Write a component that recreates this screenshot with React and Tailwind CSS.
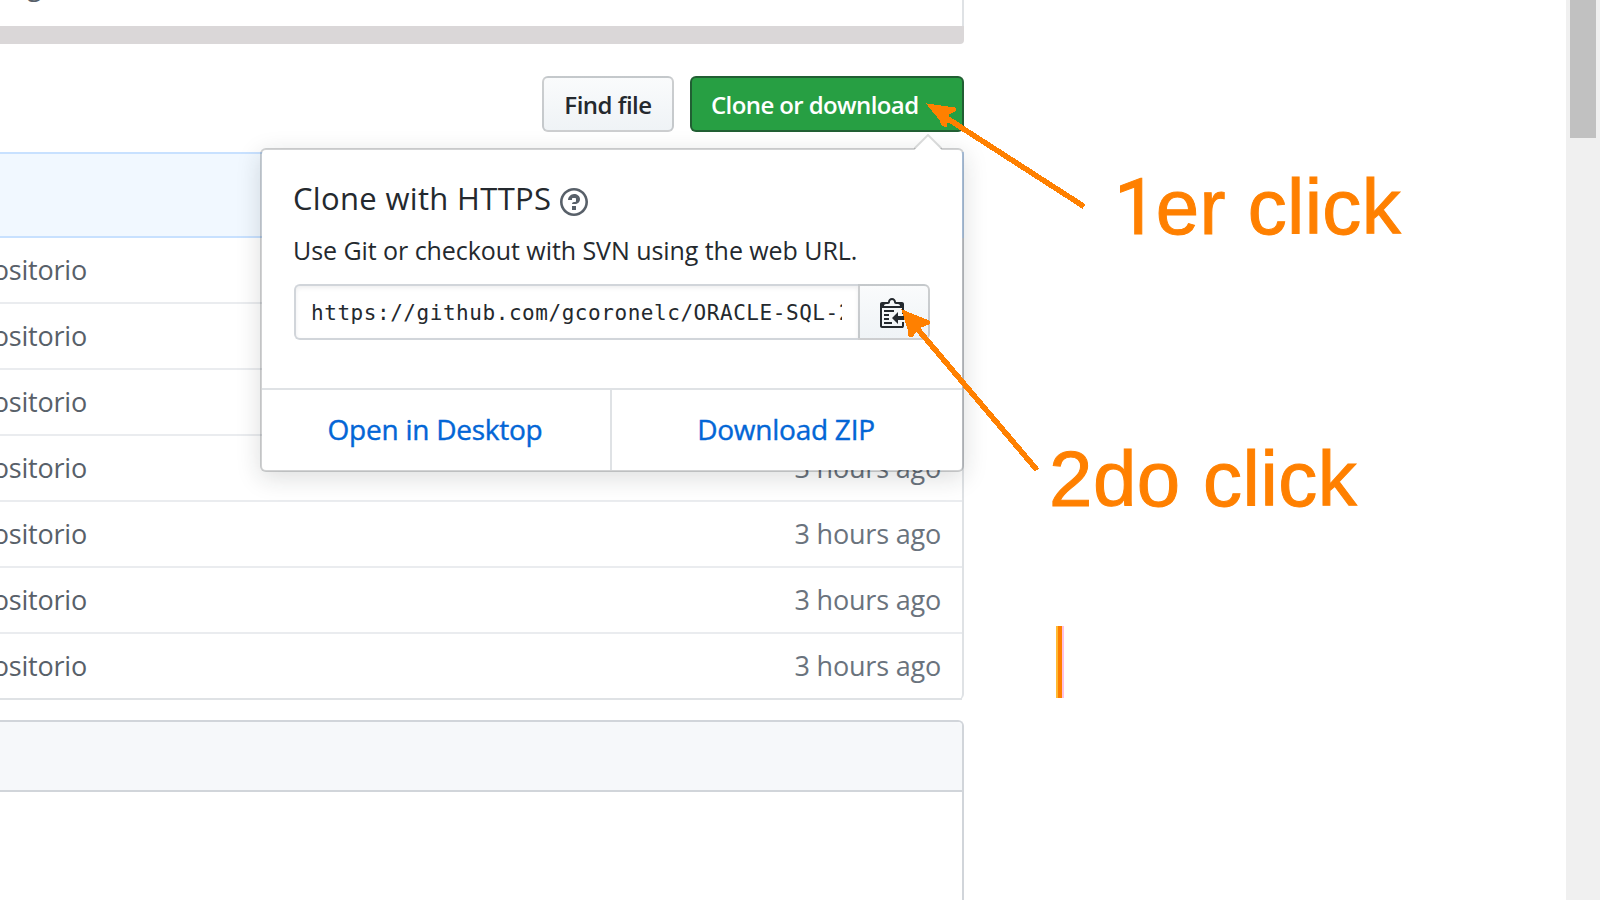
import React from 'react';

const rows = [1, 2, 3, 4, 5, 6, 7];

function CommitRow({ last }) {
  return (
    <div className={`flex h-[66px] items-center justify-between border-b-2 pr-[21px] ${last ? 'border-[#dfe2e5]' : 'border-[#eaecef]'}`}>
      <span className="flex w-[87px] justify-end overflow-hidden whitespace-nowrap text-[27px] leading-[40px] tracking-[-0.2px] text-[#586069]">
        repositorio
      </span>
      <span className="whitespace-nowrap text-[27px] leading-[40px] tracking-[-0.2px] text-[#6a737d]">3 hours ago</span>
    </div>
  );
}

function QuestionIcon() {
  return (
    <svg className="h-8 w-7 fill-[#586069]" viewBox="0 0 14 16">
      <path d="M6 10h2v2H6v-2zm4-3.5C10 8.64 8 9 8 9H6c0-.55.45-1 1-1h.5c.28 0 .5-.22.5-.5v-1c0-.28-.22-.5-.5-.5h-1c-.28 0-.5.22-.5.5V7H4c0-1.5 1.5-3 3-3s3 1 3 2.5zM7 2.3c3.14 0 5.7 2.56 5.7 5.7s-2.56 5.7-5.7 5.7A5.71 5.71 0 0 1 1.3 8c0-3.14 2.56-5.7 5.7-5.7zM7 1C3.14 1 0 4.14 0 8s3.14 7 7 7 7-3.14 7-7-3.14-7-7-7z" />
    </svg>
  );
}

function ClippyIcon() {
  return (
    <svg className="h-8 w-7 fill-[#24292e]" viewBox="0 0 14 16">
      <path fillRule="evenodd" d="M2 13h4v1H2v-1zm5-6H2v1h5V7zm2 3V8l-3 3 3 3v-2h5v-2H9zM4.5 9H2v1h2.5V9zM2 12h2.5v-1H2v1zm9 1h1v2c-.02.28-.11.52-.3.7-.19.18-.42.28-.7.3H1c-.55 0-1-.45-1-1V4c0-.55.45-1 1-1h3c0-1.11.89-2 2-2 1.11 0 2 .89 2 2h3c.55 0 1 .45 1 1v5h-1V6H1v9h10v-2zM2 5h8c0-.55-.45-1-1-1H8c-.55 0-1-.45-1-1s-.45-1-1-1-1 .45-1 1-.45 1-1 1H3c-.55 0-1 .45-1 1z" />
    </svg>
  );
}

function ClonePopover() {
  return (
    <div className="absolute top-[148px] left-[260px] flex h-[324px] w-[704px] flex-col rounded-[6px] border-2 border-[#1b1f23]/20 bg-white bg-clip-padding shadow-[0_6px_24px_rgba(27,31,35,0.15)]">
      <svg className="absolute -top-4 right-5 h-4 w-7" viewBox="0 0 28 16">
        <path d="M0 16 14 2 28 16z" fill="#fff" />
        <path d="M0 15 14 1 28 15" fill="none" stroke="#1b1f23" strokeOpacity="0.15" strokeWidth="2" />
      </svg>
      <div className="flex flex-1 flex-col px-8 pt-7">
        <h4 className="-ml-px flex h-10 items-center gap-2 whitespace-nowrap text-[31px] leading-[40px] text-[#24292e]">
          <span className="w-[259px] tracking-[0.33px]">Clone with HTTPS</span>
          <span className="pt-2"><QuestionIcon /></span>
        </h4>
        <p className="mt-3.5 -ml-px whitespace-nowrap text-[25px] leading-[36px] tracking-[-0.06px] text-[#24292e]">
          Use Git or checkout with SVN using the web URL.
        </p>
        <div className="mt-4 flex h-14 w-[636px]">
          <div className="flex w-[564px] items-center rounded-l-[6px] border-2 border-r-0 border-[#d1d5da] pt-[3px] pr-4 pl-[15px] shadow-[inset_0_2px_4px_rgba(27,31,35,0.075)]">
            <span className="w-[531px] overflow-hidden whitespace-nowrap font-['DejaVu_Sans_Mono',monospace] text-[21px] tracking-[0.55px] text-[#24292e]">
              https://github.com/gcoronelc/ORACLE-SQL-2018
            </span>
          </div>
          <div className="flex flex-1 items-center rounded-r-[6px] border-2 border-[#1b1f23]/20 bg-linear-to-b from-[#fafbfc] to-[#eff3f6] pl-5">
            <ClippyIcon />
          </div>
        </div>
      </div>
      <div className="flex h-[82px] border-t-2 border-[#dfe2e5] text-[28px] tracking-[-0.25px] text-[#0366d6] [-webkit-text-stroke:0.4px_#0366d6]">
        <a className="flex w-[350px] items-center justify-center border-r-2 border-[#dfe2e5] pr-[2px] pb-[2px]">Open in Desktop</a>
        <a className="flex flex-1 items-center justify-center pr-[2px] pb-[2px]">Download ZIP</a>
      </div>
    </div>
  );
}

function Annotations() {
  return (
    <>
      <svg className="absolute inset-0 h-[900px] w-[1600px]" viewBox="0 0 1600 900" shapeRendering="crispEdges">
        <g fill="#ff8000" stroke="#ff8000">
          <path d="M945 117 1084 206.500" strokeWidth="5.5" fill="none" />
          <path d="M927 104 955 108 955 111 949 114 946 127 942 125 940 120z" strokeWidth="1" />
          <path d="M915 326 1037 470" strokeWidth="5.5" fill="none" />
          <path d="M902 310 929 321 929 324 918 328 912 337 909 336 908 329z" strokeWidth="1" />
        </g>
      </svg>
      <div className="absolute top-[162px] left-[1114px] whitespace-nowrap font-['Liberation_Sans',sans-serif] text-[78px] leading-[90px] tracking-[0.3px] text-[#ff8000] [-webkit-text-stroke:1px_#ff8000]">
        <span className="font-['Roboto',sans-serif] tracking-[-2px]">1</span>er click
      </div>
      <div className="absolute top-[434px] left-[1049px] whitespace-nowrap font-['Liberation_Sans',sans-serif] text-[78px] leading-[90px] tracking-[0.55px] text-[#ff8000] [-webkit-text-stroke:1px_#ff8000]">2do click</div>
      <div className="absolute top-[626px] left-[1056px] h-[72px] w-2 border-r-2 border-l-2 border-r-[#ffc0e0] border-l-[#ffb932] bg-[#ff8000] bg-clip-padding" />
    </>
  );
}

export default function App() {
  return (
    <div className="relative flex h-[900px] w-[1600px] overflow-hidden bg-white font-['Open_Sans','Noto_Sans',sans-serif]">
      <main className="flex w-[964px] flex-col">
        <div className="flex h-[44px] flex-col overflow-hidden rounded-br-[4px]">
          <div className="h-[26px] overflow-hidden border-r-2 border-[#dfe2e5] pl-[27px]">
            <span className="-mt-[35px] block text-[27px] leading-[40px] text-[#586069]">g</span>
          </div>
          <div className="h-[18px] bg-[#dad7d8]" />
        </div>
        <div className="mt-8 flex h-14 justify-end gap-4 text-[24px] font-semibold">
          <button className="w-[132px] whitespace-nowrap rounded-[6px] border-2 border-[#1b1f23]/20 bg-linear-to-b from-[#fafbfc] to-[#eff3f6] pt-px text-center tracking-[-0.5px] text-[#24292e]">Find file</button>
          <button className="w-[274px] whitespace-nowrap rounded-[6px] border-2 border-[#1b1f23]/50 bg-[#279f43] pt-px pl-[19px] text-left tracking-[-0.6px] text-white">Clone or download</button>
        </div>
        <section className="mt-5 rounded-br-[6px]">
          <div className="h-[86px] border-2 border-l-0 border-[#c8e1ff] bg-[#f1f8ff]" />
          <div className="rounded-br-[6px] border-r-2 border-[#dfe2e5]">
            {rows.map((n) => <CommitRow key={n} last={n === rows.length} />)}
          </div>
        </section>
        <section className="mt-5 flex-1 rounded-tr-[6px] border-t-2 border-r-2 border-[#d1d5da]">
          <div className="h-[70px] rounded-tr-[4px] border-b-2 border-[#d1d5da] bg-[#f6f8fa]" />
        </section>
      </main>
      <div className="flex-1" />
      <aside className="w-[34px] bg-[#f0f0f0] px-1">
        <div className="h-[138px] bg-[#c1c1c1]" />
      </aside>
      <ClonePopover />
      <Annotations />
    </div>
  );
}
